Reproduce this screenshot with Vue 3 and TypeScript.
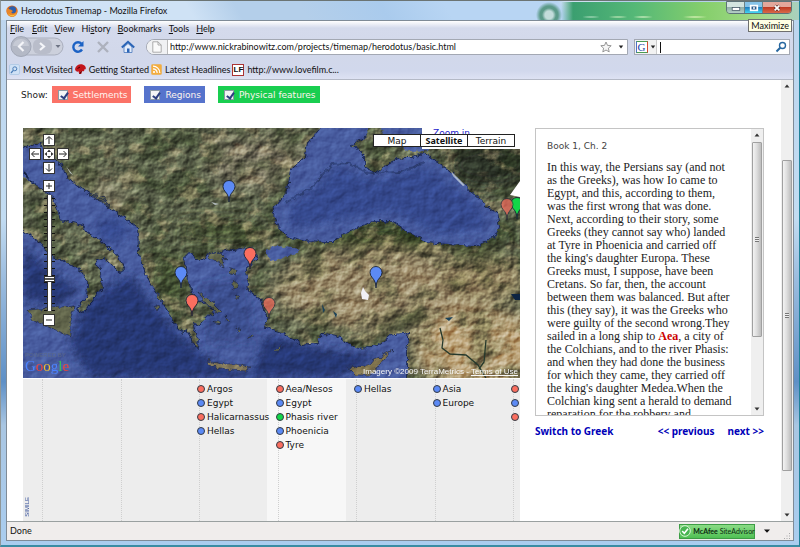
<script setup lang="ts">
import { ref } from 'vue'

type Kind = 'red' | 'blue' | 'green'
interface Pin { x: number; y: number; kind: Kind; faded?: boolean }
interface Place { name: string; kind: Kind }

const menus: [string, string, string][] = [
  ['', 'F', 'ile'], ['', 'E', 'dit'], ['', 'V', 'iew'], ['Hi', 's', 'tory'],
  ['', 'B', 'ookmarks'], ['', 'T', 'ools'], ['', 'H', 'elp'],
]

const filters = ref([
  { id: 'settlements', label: 'Settlements', kind: 'red', on: true },
  { id: 'regions', label: 'Regions', kind: 'blue', on: true },
  { id: 'physical', label: 'Physical features', kind: 'green', on: true },
])

const fills: Record<Kind, string> = { red: '#fa6e5f', blue: '#5c8af5', green: '#12d648' }

const pins: Pin[] = [
  { x: 229, y: 202, kind: 'blue' },
  { x: 250, y: 269, kind: 'red' },
  { x: 181, y: 288, kind: 'blue' },
  { x: 192, y: 316, kind: 'red' },
  { x: 269, y: 319, kind: 'red', faded: true },
  { x: 376, y: 288, kind: 'blue' },
  { x: 517, y: 219, kind: 'green' },
  { x: 507, y: 220, kind: 'red', faded: true },
]

const columns: Place[][] = [
  [
    { name: 'Argos', kind: 'red' }, { name: 'Egypt', kind: 'blue' },
    { name: 'Halicarnassus', kind: 'red' }, { name: 'Hellas', kind: 'blue' },
  ],
  [
    { name: 'Aea/Nesos', kind: 'red' }, { name: 'Egypt', kind: 'blue' },
    { name: 'Phasis river', kind: 'green' }, { name: 'Phoenicia', kind: 'blue' },
    { name: 'Tyre', kind: 'red' },
  ],
  [{ name: 'Hellas', kind: 'blue' }],
  [{ name: 'Asia', kind: 'blue' }, { name: 'Europe', kind: 'blue' }],
  [{ name: '', kind: 'red' }, { name: '', kind: 'blue' }, { name: '', kind: 'red' }],
]

const mapTypes = ['Map', 'Satellite', 'Terrain']
const activeType = ref('Satellite')
const zoom = ref(4)
const address = ref('http://www.nickrabinowitz.com/projects/timemap/herodotus/basic.html')
const query = ref('')
</script>

<template>
  <div class="window">
    <header class="titlebar">
      <svg class="fox" viewBox="0 0 12 12" aria-hidden="true">
        <circle cx="6" cy="6" r="5.600" fill="#d9661a" />
        <circle cx="6.400" cy="5" r="3.700" fill="#2c5fae" />
        <path d="M1 3C3 5 6 4 7 6.500C5 6 5 8 7 8.500C9 9 11 7 11 4C12.500 9 9 12 6 11.800C2 11.500 0 8 1 3Z" fill="#e8862a" />
        <path d="M2 8C4 11 8 11 10.500 8C9 12 4 12.500 2 8Z" fill="#f9c840" />
      </svg>
      <h1>Herodotus Timemap - Mozilla Firefox</h1>
      <div class="aero" aria-hidden="true"></div>
      <div class="winbtns">
        <button type="button" aria-label="Minimize"><svg viewBox="0 0 18 12"><rect x="5.500" y="5.500" width="8" height="3" fill="#fff" stroke="#456" stroke-width=".8" /></svg></button>
        <button type="button" class="max" aria-label="Maximize window"><svg viewBox="0 0 18 12"><rect x="6" y="3.500" width="7" height="5" fill="#2a5a8c" stroke="#fff" stroke-width="1.800" /><rect x="8.500" y="5.200" width="2" height="1.600" fill="#fff" /></svg></button>
        <button type="button" class="close" aria-label="Close"><svg viewBox="0 0 30 12"><path d="M12.500 3.500L17.500 8.500M17.500 3.500L12.500 8.500" stroke="#5b2620" stroke-width="3.200" /><path d="M12.500 3.500L17.500 8.500M17.500 3.500L12.500 8.500" stroke="#fff" stroke-width="2" /></svg></button>
      </div>
      <div class="tip" role="tooltip">Maximize</div>
    </header>

    <div class="client">
      <div class="chrome">
        <nav class="menu">
          <a v-for="m in menus" :key="m[2]" href="#">{{ m[0] }}<u>{{ m[1] }}</u>{{ m[2] }}</a>
        </nav>
        <div class="nav">
          <div class="backfwd">
            <svg viewBox="0 0 55 22" aria-hidden="true">
              <rect x="4" y="2" width="50" height="17" rx="8.500" fill="#ccd0dc" stroke="#a9aebd" />
              <circle cx="12" cy="10.500" r="10" fill="#b4b9c6" stroke="#a1a7b6" />
              <path d="M4 10a8 7 0 0 1 16 0z" fill="#c6cad5" />
              <rect x="24" y="3" width="19" height="15" rx="6" fill="#b9bdca" />
              <path d="M14.500 6L10 10.500L14.500 15M31 7L35 10.500L31 14" fill="none" stroke="#f4f5f9" stroke-width="2.200" />
              <path d="M46.500 9h5l-2.500 3z" fill="#6e7484" />
            </svg>
          </div>
          <button type="button" class="ico" aria-label="Reload">
            <svg viewBox="0 0 14 14"><path d="M11 9.500A4.700 4.700 0 1 1 10.500 3.800" fill="none" stroke="#1c62c4" stroke-width="2.400" /><path d="M12.500 1V6.500H7Z" fill="#1c62c4" /></svg>
          </button>
          <button type="button" class="ico" aria-label="Stop">
            <svg viewBox="0 0 14 14"><path d="M2 2L12 12M12 2L2 12" stroke="#adb1bd" stroke-width="2.400" /></svg>
          </button>
          <button type="button" class="ico" aria-label="Home">
            <svg viewBox="0 0 14 14"><path d="M3 7L7 3.500L11 7V12.500H3Z" fill="#e4edfb" stroke="#4a78bd" stroke-width=".8" /><path d="M.8 7.500L7 1.800L13.200 7.500" fill="none" stroke="#2b65b6" stroke-width="2" /><rect x="6" y="8.500" width="2.500" height="4" fill="#2b65b6" /></svg>
          </button>
          <div class="urlbox">
            <span class="fav"><svg viewBox="0 0 10 12" aria-hidden="true"><path d="M.8 .8H6L9.200 4V11.200H.8Z" fill="#fafafa" stroke="#999" stroke-width=".8" /><path d="M6 .8V4H9.200" fill="none" stroke="#999" stroke-width=".8" /></svg></span>
            <input v-model="address" type="text" aria-label="Address" />
            <svg class="star" viewBox="0 0 12 12" aria-hidden="true"><path d="M6 1L7.500 4.400L11.200 4.700L8.400 7.200L9.200 10.900L6 9L2.800 10.900L3.600 7.200L.8 4.700L4.500 4.400Z" fill="#f6f6f6" stroke="#8b8b8b" stroke-width=".9" /></svg>
            <svg class="caret" viewBox="0 0 6 4" aria-hidden="true"><path d="M.8 .5H5.200L3 3.500Z" fill="#222" /></svg>
          </div>
          <div class="searchbox">
            <button type="button" class="engine" aria-label="Search engine">
              <span class="g">G</span>
              <svg class="caret" viewBox="0 0 6 4"><path d="M.8 .5H5.200L3 3.500Z" fill="#222" /></svg>
            </button>
            <i class="cursor"></i>
            <input v-model="query" type="text" aria-label="Search" />
            <svg class="lens" viewBox="0 0 12 12" aria-hidden="true"><circle cx="7.500" cy="4.500" r="3" fill="none" stroke="#27679f" stroke-width="1.400" /><path d="M5.200 6.800L1.500 10.500" stroke="#27679f" stroke-width="2" /></svg>
          </div>
        </div>
        <nav class="bookmarks">
          <a href="#"><svg viewBox="0 0 11 11" aria-hidden="true"><rect x=".5" y=".5" width="10" height="10" rx="1.500" fill="#cfe1f5" stroke="#b3cbe6" /><circle cx="5.800" cy="4.800" r="2" fill="none" stroke="#4b7db8" /><path d="M4.300 6.300L2 9" stroke="#4b7db8" stroke-width="1.300" /></svg>Most Visited</a>
          <a href="#"><svg viewBox="0 0 11 11" aria-hidden="true"><path d="M0 5C1 0 7 -1 10 2C12 5 10 6 9 5.500C10 7 8 8 7 7L6.500 9.500C5 11 3 9 4 7.500C2 8 0 7 0 5Z" fill="#c3161c" /><path d="M2.500 4.500L5 3M6.500 7.500L4.500 10" stroke="#400" stroke-width="1" /></svg>Getting Started</a>
          <a href="#"><svg viewBox="0 0 11 11" aria-hidden="true"><rect x=".5" y=".5" width="10" height="10" rx="1" fill="#f5ad3d" stroke="#e6b66a" /><circle cx="3" cy="8" r="1.100" fill="#fff" /><path d="M2 4.800A4.200 4.200 0 0 1 6.200 9M2 2.200A6.800 6.800 0 0 1 8.800 9" fill="none" stroke="#fff" stroke-width="1.200" /></svg>Latest Headlines</a>
          <a href="#"><i class="lf">LF</i>http://www.lovefilm.c...</a>
        </nav>
      </div>

      <div class="viewport">
        <main class="page">
          <div class="filters">
            <span>Show:</span>
            <label v-for="f in filters" :key="f.id" :for="f.id" :class="['filter', f.kind]">
              <input :id="f.id" v-model="f.on" type="checkbox" />{{ f.label }}
            </label>
          </div>

          <div class="columns">
            <section class="timemap">
              <div class="map">
                <svg class="terrain" viewBox="23 128 497 250" preserveAspectRatio="xMidYMid slice" role="img" aria-label="Satellite map of the Aegean and Black Sea">
                  <defs>
                    <filter id="relief" x="0" y="0" width="100%" height="100%" color-interpolation-filters="sRGB">
                      <feTurbulence type="fractalNoise" baseFrequency=".08 .09" numOctaves="6" seed="11" />
                      <feColorMatrix values="0 0 0 0 0  0 0 0 0 0  0 0 0 0 0  1 0 0 0 0" />
                      <feDiffuseLighting surfaceScale="1.100" lighting-color="#fff"><feDistantLight azimuth="225" elevation="30" /></feDiffuseLighting>
                    </filter>
                    <filter id="patches" x="0" y="0" width="100%" height="100%" color-interpolation-filters="sRGB">
                      <feTurbulence type="fractalNoise" baseFrequency=".03 .045" numOctaves="6" seed="4" />
                      <feColorMatrix values="0 0 0 0 .15  0 0 0 0 .21  0 0 0 0 .10  4 0 0 0 -1.800" />
                    </filter>
                    <filter id="dust" x="0" y="0" width="100%" height="100%" color-interpolation-filters="sRGB">
                      <feTurbulence type="fractalNoise" baseFrequency=".05 .07" numOctaves="6" seed="23" />
                      <feColorMatrix values="0 0 0 0 .68  0 0 0 0 .60  0 0 0 0 .45  5 0 0 0 -2.600" />
                    </filter>
                    <filter id="coast" filterUnits="userSpaceOnUse" x="13" y="118" width="517" height="270" color-interpolation-filters="sRGB">
                      <feTurbulence type="fractalNoise" baseFrequency=".18" numOctaves="3" seed="3" />
                      <feDisplacementMap in="SourceGraphic" scale="6" xChannelSelector="R" yChannelSelector="G" />
                    </filter>
                    <filter id="soft" x="-40%" y="-60%" width="180%" height="220%"><feGaussianBlur stdDeviation="9" /></filter>
                    <filter id="deepsoft" x="-40%" y="-40%" width="180%" height="180%"><feGaussianBlur stdDeviation="4" /></filter>
                    <clipPath id="seas">
                      <path d="M13 148L30 146L40 143L45 150L60 163L70 180L92 195L117 212L138 228L139 255L147 277L160 297L168 310L173 322L183 333L187 330L197 348L198 340L192 323L200 325L205 317L213 313L208 305L195 300L187 280L183 257L188 252L200 260L207 255L225 250L250 247L258 256L246 272L249 290L262 300L268 320L265 327L285 333L302 345L317 343L322 333L337 335L357 348L375 347L390 335L410 332L407 350L407 388L13 388L13 230L23 230L40 242L50 255L72 265L83 273L88 283L87 297L77 310L83 312L92 300L102 287L100 270L95 260L103 257L120 272L125 270L118 257L100 240L83 230L85 226L60 220L53 197L35 185L13 170Z" />
                      <path d="M320 118V128L307 143L305 157L290 170L287 192L277 203L272 213L278 227L287 237L305 242L332 243L348 232L372 222L393 222L408 232L428 243L452 245L475 247L495 237L500 227L497 213L478 198L455 175L432 158L425 153L408 157L398 158L375 172L365 167L365 155L352 145L368 137L366 118Z" />
                      <path d="M376 118H430V150L408 151L398 146L386 140Z" />
                      <path d="M265 250L278 246L300 249L292 256L270 261Z" />
                    </clipPath>
                  </defs>

                  <rect x="23" y="128" width="497" height="250" fill="#5d644d" />
                  <g filter="url(#soft)">
                    <ellipse cx="255" cy="160" rx="50" ry="26" fill="#7a7462" />
                    <ellipse cx="100" cy="190" rx="40" ry="12" transform="rotate(35 100 190)" fill="#7f7a63" />
                    <ellipse cx="380" cy="290" rx="105" ry="40" fill="#9b8b6b" />
                    <ellipse cx="480" cy="350" rx="66" ry="42" fill="#bda479" />
                    <ellipse cx="480" cy="280" rx="45" ry="22" fill="#877856" />
                    <ellipse cx="400" cy="238" rx="110" ry="12" fill="#2c3c1e" />
                    <ellipse cx="490" cy="165" rx="44" ry="24" fill="#2c3227" />
                    <ellipse cx="170" cy="280" rx="18" ry="30" fill="#425033" />
                    <ellipse cx="220" cy="232" rx="46" ry="9" fill="#3c4a2b" />
                    <ellipse cx="335" cy="140" rx="14" ry="12" fill="#6c684b" />
                    <ellipse cx="400" cy="322" rx="34" ry="8" transform="rotate(-30 400 322)" fill="#3f4a30" />
                  </g>
                  <rect x="23" y="128" width="497" height="250" filter="url(#patches)" opacity=".4" />
                  <rect x="23" y="128" width="497" height="250" filter="url(#dust)" opacity=".4" />
                  <rect class="shade" x="23" y="128" width="497" height="250" filter="url(#relief)" />

                  <g filter="url(#coast)">
                    <g clip-path="url(#seas)">
                      <rect x="13" y="118" width="517" height="270" fill="#485c9f" />
                      <g filter="url(#deepsoft)" fill="#263975">
                        <path d="M85 300L130 275L150 300L180 335L210 360L260 378H90L70 345Z" />
                        <path d="M23 245L50 270L80 290L60 305L23 300Z" />
                        <path d="M265 335L330 350L380 355L340 378H250Z" />
                        <path d="M200 285L245 275L255 340L210 345Z" opacity=".4" />
                      </g>
                      <g filter="url(#deepsoft)" fill="#364a8e">
                        <path d="M290 205L320 185L335 165L375 180L425 165L480 205L488 230L440 235L390 212L340 220L290 228Z" />
                        <ellipse cx="112" cy="230" rx="15" ry="12" />
                      </g>
                      <path d="M285 203L310 189L332 164L350 163L367 173L400 172L425 163" fill="none" stroke="#1e2d5c" stroke-width="2" opacity=".5" />
                      <g fill="none" stroke="#0e1838" stroke-width="1.600" opacity=".85">
                        <path d="M320 128L307 143L305 157L290 170L287 192L277 203L272 213L278 227L287 237L305 242L332 243L348 232L372 222L393 222L408 232L428 243L452 245L475 247L495 237L500 227L497 213L478 198L455 175L432 158L425 153L408 157L398 158L375 172L365 167L365 155L352 145L368 137" />
                        <path d="M23 148L40 143L45 150L60 163L70 180L92 195L117 212L138 228L139 255L147 277L160 297L168 310L173 322L183 333L187 330L197 348L198 340L192 323L200 325L205 317L213 313L208 305L195 300L187 280L183 257L188 252L200 260L207 255L225 250L250 247L258 256L246 272L249 290L262 300L268 320L265 327L285 333L302 345L317 343L322 333L337 335L357 348L375 347L390 335L410 332L407 350V380" />
                        <path d="M23 230L40 242L50 255L72 265L83 273L88 283L87 297L77 310L83 312L92 300L102 287L100 270L95 260L103 257L120 272L125 270L118 257L100 240L83 230L85 226L60 220L53 197L35 185L23 173" />
                      </g>
                    </g>
                    <g fill="#62664c" stroke="#1d2850" stroke-width=".7">
                      <path d="M27 310L50 308L74 306L70 320L70 336L57 331L33 320Z" />
                      <path d="M207 360L220 364L235 364L250 367L247 371L230 370L208 365Z" fill="#81775a" />
                      <path d="M348 368L365 366L392 350L378 366L372 375L355 375Z" fill="#82754f" />
                      <path d="M198 291L210 301L222 313L218 313L205 303Z" />
                      <path d="M231 268l5 2l-1 4l-5-2zM231 282l4-1l3 6l-4 2zM236 295l5 2l-3 2zM236 327l5 2l-3 3zM247 337l5-3l1 3zM275 352l6-8l-2 8zM214 320l6 3l-2 2zM226 316l4 4l-2 1zM158 295l4 4l-2 3l-4-4zM155 306l4 1l-1 4zM90 194l12 2l5 5zM94 199l12 3l4 4z" />
                      <path d="M207 255l9 6l8 6l-2-9l6 2l-8-8z" />
                    </g>
                  </g>
                  <rect class="shade faint" x="23" y="128" width="497" height="250" filter="url(#relief)" />
                  <path d="M363 287L365 291L369 295L368 300L362 299L361 293Z" fill="#f1f0f5" />
                  <path d="M322 304l3 6l-2 3zM333 311l4 3l-1 4zM445 318l8-1l-4 4z" fill="#1d4258" />
                  <path d="M511 294h9v6h-5z" fill="#0d2342" />
                  <path d="M440 328L443 340L442 348L450 354L466 355L478 365L486 378M486 340L484 362L479 369" fill="none" stroke="#26392c" stroke-width="1.300" />
                  <path d="M451 171l6 6l8 8l-2 1l-10-10zM66 166l7 9l-3-2zM211 202l8 2l-4 1z" fill="#dce6ee" opacity=".7" />

                  <path d="M510 195L520 181V197Z" fill="#fff" />
                  <g v-for="(p, i) in pins" :key="i" :transform="`translate(${p.x} ${p.y})`" :opacity="p.faded ? 0.7 : 1">
                    <path d="M0 0L-.6 -5C-2 -10 -6 -11 -6 -15.500A6 6 0 0 1 6 -15.500C6 -11 2 -10 .6 -5Z" :fill="fills[p.kind]" stroke="#1d2536" stroke-width=".9" />
                  </g>
                </svg>

                <div class="gap"><a href="#">Zoom in</a></div>
                <div class="types">
                  <button v-for="t in mapTypes" :key="t" type="button" :class="{ active: t === activeType }" @click="activeType = t">{{ t }}</button>
                </div>

                <div class="controls">
                  <div class="pan">
                    <button type="button" class="up" aria-label="Pan up"><svg viewBox="0 0 10 10"><path d="M5 9V2M2 4.500L5 1.500L8 4.500" /></svg></button>
                    <button type="button" class="left" aria-label="Pan left"><svg viewBox="0 0 10 10"><path d="M9 5H2M4.500 2L1.500 5L4.500 8" /></svg></button>
                    <button type="button" class="home" aria-label="Recenter"><svg viewBox="0 0 10 10"><path class="solid" d="M5 .5L7 3H3ZM5 9.500L7 7H3ZM.5 5L3 3V7ZM9.500 5L7 3V7Z" /></svg></button>
                    <button type="button" class="right" aria-label="Pan right"><svg viewBox="0 0 10 10"><path d="M1 5H8M5.500 2L8.500 5L5.500 8" /></svg></button>
                    <button type="button" class="down" aria-label="Pan down"><svg viewBox="0 0 10 10"><path d="M5 1V8M2 5.500L5 8.500L8 5.500" /></svg></button>
                  </div>
                  <button type="button" aria-label="Zoom in one level"><svg viewBox="0 0 10 10"><path d="M2 5H8M5 2V8" /></svg></button>
                  <div class="track"><input v-model="zoom" type="range" min="0" max="15" aria-label="Zoom level" /></div>
                  <button type="button" aria-label="Zoom out one level"><svg viewBox="0 0 10 10"><path d="M2 5H8" /></svg></button>
                </div>

                <div class="brand">
                  <small>POWERED BY</small>
                  <span><b class="g1">G</b><b class="g2">o</b><b class="g3">o</b><b class="g1">g</b><b class="g4">l</b><b class="g2">e</b></span>
                </div>
                <div class="credit">Imagery ©2009 TerraMetrics - <a href="#">Terms of Use</a></div>
              </div>

              <div class="timeline">
                <div class="rules" aria-hidden="true"><i v-for="n in 8" :key="n"></i></div>
                <div class="events">
                  <ul v-for="(col, c) in columns" :key="c">
                    <li v-for="(e, i) in col" :key="i"><i :class="['dot', e.kind]"></i>{{ e.name }}</li>
                  </ul>
                </div>
                <span class="simile">SIMILE</span>
              </div>
            </section>

            <aside class="reader">
              <div class="book">
                <article>
                  <h2>Book 1, Ch. 2</h2>
                  <p>
                    In this way, the Persians say (and not<br />as the Greeks), was how Io came to<br />Egypt, and this, according to them,<br />was the first wrong that was done.<br />Next, according to their story, some<br />Greeks (they cannot say who) landed<br />at Tyre in Phoenicia and carried off<br />the king's daughter Europa. These<br />Greeks must, I suppose, have been<br />Cretans. So far, then, the account<br />between them was balanced. But after<br />this (they say), it was the Greeks who<br />were guilty of the second wrong.They<br />sailed in a long ship to <b>Aea</b>, a city of<br />the Colchians, and to the river Phasis:<br />and when they had done the business<br />for which they came, they carried off<br />the king's daughter Medea.When the<br />Colchian king sent a herald to demand<br />reparation for the robbery and
                  </p>
                </article>
                <div class="bar" aria-hidden="true">
                  <svg viewBox="0 0 6 4"><path d="M3 .5L5.500 3.500H.5Z" fill="#333" /></svg>
                  <div class="rail"><div class="thumb inner"><i></i></div></div>
                  <svg viewBox="0 0 6 4"><path d="M3 3.500L5.500 .5H.5Z" fill="#333" /></svg>
                </div>
              </div>
              <div class="links">
                <a href="#">Switch to Greek</a>
                <a href="#" class="prev">&lt;&lt; previous</a>
                <a href="#">next &gt;&gt;</a>
              </div>
            </aside>
          </div>
        </main>
        <div class="bar outer" aria-hidden="true">
          <svg viewBox="0 0 6 4"><path d="M3 .5L5.500 3.500H.5Z" fill="#333" /></svg>
          <div class="rail"><div class="thumb"><i></i></div></div>
          <svg viewBox="0 0 6 4"><path d="M3 3.500L5.500 .5H.5Z" fill="#333" /></svg>
        </div>
      </div>

      <footer class="status">
        <span class="done">Done</span>
        <button type="button" class="advisor">
          <svg viewBox="0 0 12 12" aria-hidden="true"><circle cx="6" cy="6" r="5.300" fill="#49b552" stroke="#d8f5d6" stroke-width="1" /><path d="M3.200 6L5.300 8.200L9 3.800" fill="none" stroke="#fff" stroke-width="1.600" /></svg>
          <span><b>McAfee</b> SiteAdvisor</span>
        </button>
        <svg class="more" viewBox="0 0 6 4" aria-hidden="true"><path d="M0 .5H6L3 3.800Z" fill="#111" /></svg>
        <svg class="grip" viewBox="0 0 8 8" aria-hidden="true"><path d="M6 1h1v1H6zM6 3.500h1v1H6zM6 6h1v1H6zM3.500 3.500h1v1h-1zM3.500 6h1v1h-1zM1 6h1v1H1z" fill="#aaa" /></svg>
      </footer>
    </div>
  </div>
</template>

<style>
body { margin: 0; background: #a9b2b5; }
</style>

<style scoped>
* { box-sizing: border-box; }
button { padding: 0; border: 0; background: none; display: flex; align-items: center; justify-content: center; font: inherit; color: inherit; }
a { color: inherit; text-decoration: none; }
input { font: inherit; }

.window {
  height: 100vh;
  display: flex;
  flex-direction: column;
  padding: 1px 5px 4px;
  border: 1px solid #8f9798;
  border-right-color: #1f8198;
  border-bottom: 2px solid #3a8ca3;
  border-top-color: #6b7473;
  background: linear-gradient(180deg, #bdd5ee 0, #c2dcf2 40%, #9fbfe0 50%, #5f90c6 70%, #a9c6e2 78%, #aacdef 100%);
  font: 9px/12px Lato, "Open Sans", sans-serif;
  color: #111;
}

.titlebar { position: relative; display: flex; align-items: center; height: 18px; flex: none; }
.titlebar::before {
  content: ""; position: absolute; inset: -1px -5px 0;
  background: linear-gradient(60deg, #cfe2f5 0 24%, #b4cfea 30% 38%, #aacbed 48%, #b8d5f3 56% 70%, #cddff0 71% 75%, #b5d0ea 77%);
}
.fox { position: relative; width: 12px; height: 12px; }
h1 { position: relative; flex: 1; margin: 0 0 0 3px; font-size: 9px; font-weight: 400; }
.aero {
  position: absolute; right: -5px; top: 0; width: 264px; height: 18px;
  background:
    radial-gradient(circle at 14px 13px, #c3dcdb 4px, #5b9a89 7px 9px, transparent 13px),
    radial-gradient(ellipse at 56px 15px, #cdeed4 2px, transparent 11px),
    radial-gradient(ellipse at 83px 15px, #cdeec0 2px, transparent 11px),
    radial-gradient(ellipse at 108px 15px, #cdeec0 2px, transparent 11px),
    radial-gradient(ellipse at 160px 15px, #d3efb0 2px, transparent 13px),
    linear-gradient(90deg, transparent 26px, #3b9f70 38px, #55b877 100px, #86cf6c 170px, #a5da8c 230px, #a9cfc0);
}
.winbtns { position: absolute; right: 2px; top: -1px; display: flex; height: 13px; border: 1px solid #5d7278; border-radius: 0 0 4px 4px; overflow: hidden; }
.winbtns button { width: 18px; background: linear-gradient(#d3e4df 45%, #93b0a8 50%, #b4cdc5); border-right: 1px solid #6c8285; }
.winbtns .max { background: linear-gradient(#86c3e8 45%, #1f7fc0 50%, #42d6f4); }
.winbtns .close { width: 28px; border: 0; background: linear-gradient(#e3a79b 45%, #bf3b24 50%, #d9694a); }
.winbtns svg { height: 12px; }
.tip { position: absolute; right: 2px; top: 17px; z-index: 5; padding: 0 2px; border: 1px solid #6f6f6f; background: #ffffe4; line-height: 11px; }

.client { flex: 1; min-height: 0; display: flex; flex-direction: column; border: 1px solid #7f8b97; background: #fff; }
.chrome { flex: none; background: linear-gradient(#fff 0, #d4daec 7px, #d2d8ea 30px, #d1d8ec 50px, #dde2f3 100%); border-bottom: 1px solid #b4b9c6; }
.menu { display: flex; align-items: center; gap: 7px; height: 15px; padding-left: 3px; }
.menu a { min-width: 15px; }
.nav { display: flex; align-items: center; height: 22px; padding: 0 3px 0 2px; }
.backfwd { width: 55px; height: 22px; margin-right: 7px; }
.backfwd svg { display: block; }
.ico { width: 14px; margin-right: 11px; }
.ico svg { width: 14px; height: 14px; }
.urlbox, .searchbox { display: flex; align-items: center; height: 16px; border: 1px solid #a3a8b3; background: #fff; }
.urlbox { flex: 1; margin-right: 6px; border-radius: 8px 0 0 8px; }
.urlbox input { flex: 1; min-width: 0; border: 0; padding: 0 0 0 2px; outline: 0; background: none; color: #111; }
.fav { display: flex; align-items: center; justify-content: center; width: 21px; height: 14px; border-right: 1px solid #bbb; background: #f0f1f3; border-radius: 7px 0 0 7px; }
.fav svg { width: 10px; height: 12px; }
.star { width: 12px; height: 12px; margin-right: 6px; }
.caret { width: 6px; height: 4px; margin-right: 3px; }
.searchbox { width: 156px; }
.engine { width: 22px; height: 14px; gap: 2px; border-right: 1px solid #ccc; background: #f2f2f2; }
.engine .caret { margin: 0; }
.g { width: 12px; height: 12px; border: 1px solid #4b9b52; border-left-color: #4c72c9; border-right-color: #d6492f; background: #fff; font: 11px/11px "Liberation Serif", serif; color: #2241a8; text-align: center; }
.cursor { width: 1px; height: 11px; margin-left: 3px; background: #111; }
.searchbox input { flex: 1; min-width: 0; border: 0; outline: 0; padding: 0; }
.lens { width: 12px; height: 12px; margin-right: 2px; }
.bookmarks { display: flex; align-items: center; gap: 2px; height: 21px; padding: 2px 2px 0; }
.bookmarks a { display: flex; align-items: center; gap: 3px; }
.bookmarks svg { width: 11px; height: 11px; }
.lf { width: 12px; height: 12px; border: 1px solid #a33; background: #fff; font: bold 8px/10px "Liberation Sans", sans-serif; text-align: center; }

.viewport { flex: 1; min-height: 0; display: flex; }
.page { flex: 1; min-width: 0; overflow: hidden; padding: 6px 17px 0 16px; font: 9px/12px "DejaVu Sans", sans-serif; color: #222; }
.filters { display: flex; align-items: center; margin-left: -2px; }
.filters > span { margin-right: 4px; }
.filter { display: flex; align-items: center; gap: 5px; height: 17px; margin-right: 13px; padding: 0 4px 0 6px; color: #fff3ee; }
.filter.red { background: #fb7267; }
.filter.blue { background: #5673cc; }
.filter.green { background: #19ce50; }
.filter input { appearance: none; position: relative; width: 10px; height: 10px; margin: 0; border: 1px solid #8c9aa5; background: #f3f5f6; }
.filter input:checked::after { content: ""; position: absolute; left: 3px; top: 0; width: 3px; height: 6px; border: solid #2c3f80; border-width: 0 2px 2px 0; transform: rotate(35deg); }

.columns { display: grid; grid-template-columns: minmax(0, 1fr) 229px; gap: 15px; margin-top: 25px; }
.map { position: relative; height: 250px; overflow: hidden; }
.terrain { display: block; width: 100%; height: 100%; }
.shade { mix-blend-mode: overlay; }
.faint { opacity: .5; }
.gap { position: absolute; right: 0; top: 0; width: 98px; height: 21px; padding-left: 11px; background: #fff; color: #2222cc; line-height: 11px; }
.types { position: absolute; right: 5px; top: 6px; display: flex; gap: 0; }
.types button { width: 48px; height: 13px; margin-left: -1px; border: 1px solid #222; background: #fff; color: #111; }
.types .active { font-family: "Noto Sans", sans-serif; font-weight: 700; }
.controls { position: absolute; left: 6px; top: 6px; display: flex; flex-direction: column; align-items: center; }
.pan { display: grid; grid-template: repeat(3, 12px) / repeat(3, 12px); gap: 2px; margin-bottom: 6px; }
.controls button { width: 12px; height: 12px; border: 1px solid #333; background: #fff; }
.controls button svg { width: 10px; height: 10px; fill: none; stroke: #222; stroke-width: 1; }
.controls .solid { fill: #333; stroke: none; }
.up, .down { grid-column: 2; }
.left { grid-column: 1; }
.track { display: flex; justify-content: center; width: 11px; height: 116px; margin: 3px 0; background: repeating-linear-gradient(180deg, transparent 0 3px, #111 3px 4px, transparent 4px 7px); }
.track input { appearance: none; writing-mode: vertical-lr; direction: rtl; width: 11px; height: 116px; margin: 0; background: linear-gradient(90deg, transparent 3px, #333 3px 4px, #fff 4px 7px, #444 7px 8px, transparent 8px); }
.track input::-webkit-slider-thumb { appearance: none; width: 11px; height: 6px; border: 1px solid #333; background: linear-gradient(#fff 1px, #555 1px 3px, #fff 3px); }
.brand { position: absolute; left: 2px; bottom: 4px; display: flex; flex-direction: column; font: 15px/15px "Liberation Serif", serif; }
.brand small { font: 6px/7px "Liberation Sans", sans-serif; color: #5b6888; }
.brand b { font-weight: 400; }
.brand .g1 { color: #4b82ff; }
.brand .g2 { color: #f0443c; }
.brand .g3 { color: #f0bd30; }
.brand .g4 { color: #34c257; }
.credit { position: absolute; right: 2px; bottom: 1px; font: 8px/10px "Liberation Sans", sans-serif; color: #f8f8f8; }
.credit a { text-decoration: underline; }

.timeline { position: relative; height: 170px; margin-top: 1px; background: linear-gradient(90deg, #ededed 49%, #f7f7f7 49% 65%, #ededed 65%); }
.rules { position: absolute; inset: 0; display: grid; grid-template-columns: 38fr repeat(6, 157fr) 14fr; }
.rules i + i { border-left: 1px dotted #cfcfcf; }
.events { position: relative; display: grid; grid-template-columns: minmax(0, 348fr) repeat(4, minmax(0, 157fr)) minmax(0, 18fr); padding-top: 3px; }
.events ul:first-child { grid-column: 2; }
ul { margin: 0; padding: 0; list-style: none; }
li { display: flex; align-items: center; gap: 2px; height: 14px; white-space: nowrap; color: #111; }
.dot { flex: none; width: 8px; height: 8px; border: 1px solid #333a44; border-radius: 50%; }
.dot.red { background: #fa6e5f; }
.dot.blue { background: #5c8af5; }
.dot.green { background: #12d648; }
.simile { position: absolute; left: 1px; top: 118px; font: 6px/7px "Liberation Sans", sans-serif; color: #35509a; writing-mode: vertical-rl; transform: rotate(180deg); }

.book { display: flex; height: 288px; border: 1px solid #c4c4c4; overflow: hidden; }
article { flex: 1; min-width: 0; padding: 11px 0 0 11px; }
h2 { margin: 0 0 9px; font: 9px/12px "DejaVu Sans", sans-serif; color: #444; }
p { margin: 0; font: 12px/13px "Liberation Serif", serif; color: #222; white-space: nowrap; }
p b { color: #cc0000; }
.bar { flex: none; display: flex; flex-direction: column; align-items: center; width: 12px; padding: 4px 0; background: #efefef; }
.bar svg { flex: none; width: 6px; height: 4px; }
.rail { flex: 1; width: 100%; padding: 5px 1px; display: flex; flex-direction: column; }
.thumb { display: flex; align-items: center; justify-content: center; border: 1px solid #a0a0a0; border-radius: 1px; background: linear-gradient(90deg, #f3f3f3, #dedede 45%, #bdbdbd); }
.thumb i { width: 4px; height: 5px; background: repeating-linear-gradient(#777 0 1px, #eee 1px 2px); }
.thumb.inner { height: 75%; }
.outer .thumb { height: 75%; margin-top: 67px; flex: none; }
.links { display: flex; margin-top: 9px; font-family: "Noto Sans", sans-serif; font-size: 10px; font-weight: 700; color: #0000b8; }
.prev { margin: 0 13px 0 auto; }

.status { flex: none; display: flex; align-items: center; height: 19px; padding-right: 2px; border-top: 1px solid #9aa0a0; background: #f0edec; }
.done { flex: 1; padding-left: 3px; }
.advisor { gap: 2px; width: 76px; height: 15px; border: 1px solid #3d9d45; background: linear-gradient(#8bdc86, #4fc053); font-size: 7px; line-height: 9px; color: #0c2a10; white-space: nowrap; }
.advisor svg { width: 12px; height: 12px; flex: none; }
.more { width: 6px; height: 4px; margin: 0 13px 0 9px; }
.grip { width: 8px; height: 8px; align-self: flex-end; }
</style>
